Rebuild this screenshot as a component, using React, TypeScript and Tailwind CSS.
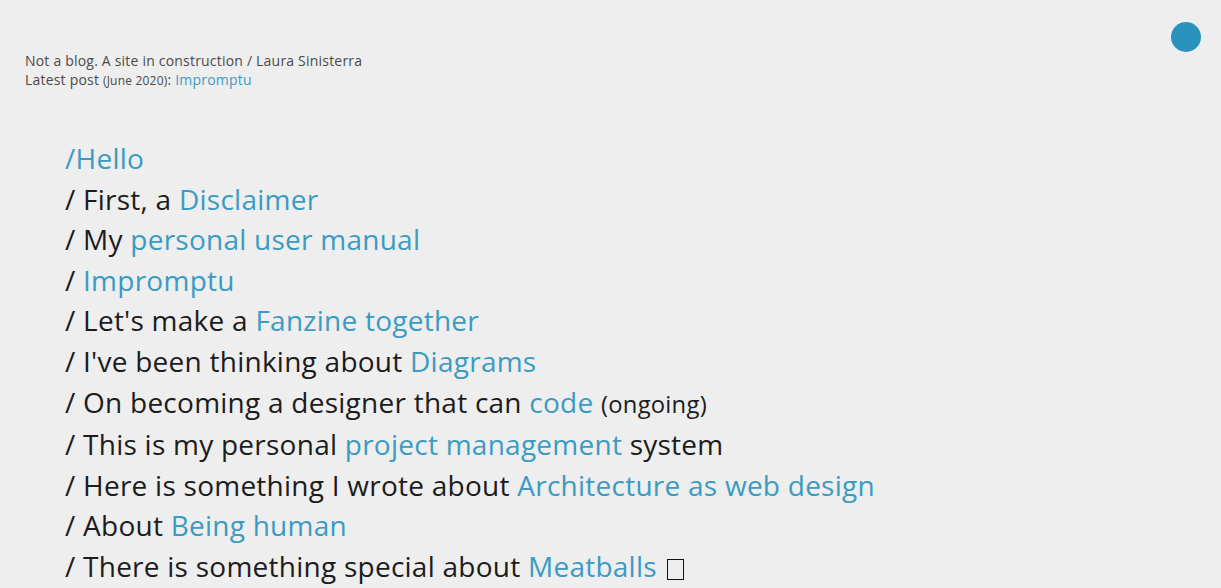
import React from "react";

const L = ({ children }: { children: React.ReactNode }) => (
  <a href="#" className="text-[#3a9bc3] no-underline">{children}</a>
);

export default function App() {
  const items: React.ReactNode[] = [
    <>/ First, a <L>Disclaimer</L></>,
    <>/ My <L>personal user manual</L></>,
    <>/ <L>Impromptu</L></>,
    <>/ Let's make a <L>Fanzine together</L></>,
    <>/ I've been thinking about <L>Diagrams</L></>,
    <>/ On becoming a designer that can <L>code</L> <span className="text-[0.85em]">(ongoing)</span></>,
    <>/ This is my personal <L>project management</L> system</>,
    <>/ Here is something I wrote about <L>Architecture as web design</L></>,
    <>/ About <L>Being human</L></>,
    <>/ There is something special about <L>Meatballs</L>{" "}<span className="inline-block ml-[3px] w-[17px] h-[21px] border border-[#111] align-[-3px]" /></>,
  ];
  return (
    <div className="relative min-h-[588px] h-[588px] overflow-hidden bg-[#eeeeee] font-['Open_Sans',sans-serif]">
      <div className="absolute right-[20px] top-[22px] w-[30px] h-[30px] rounded-full bg-[#2a93bd]" />
      <header className="pt-[51px] pl-[25px] text-[14px] tracking-[0.2px] leading-[19px] text-[#4a4a4a]">
        <div>Not a blog. A site in construction / Laura Sinisterra</div>
        <div>
          Latest post <span className="text-[12px]">(June 2020)</span>: <L>Impromptu</L>
        </div>
      </header>
      <main className="mt-[48px] pl-[65px] text-[28px] tracking-[0.25px] leading-[40.6px] text-[#1c1c1c]">
        <div><L>/Hello</L></div>
        {items.map((it, i) => (
          <div key={i}>{it}</div>
        ))}
      </main>
    </div>
  );
}
